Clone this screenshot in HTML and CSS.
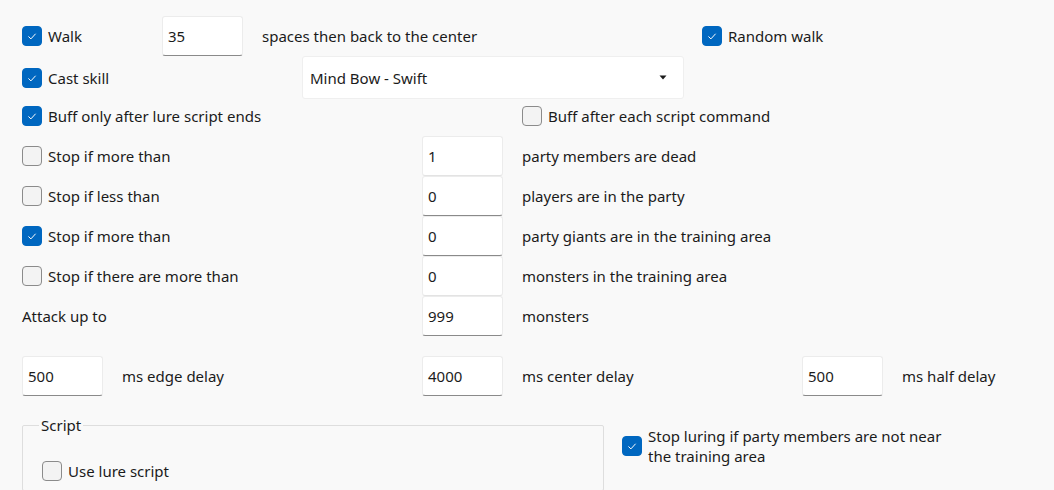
FILE: index.html
```html
<!DOCTYPE html>
<html>
<head>
<meta charset="utf-8">
<link rel="stylesheet" href="styles.css">
</head>
<body>
<div class="form">
  <div class="row r-walk">
    <div class="check"><span class="box on"><svg viewBox="0 0 20 20"><polyline points="6,10.5 8.8,13.2 14,7.5"/></svg></span><span>Walk</span></div>
    <div class="field">35</div>
    <span class="text">spaces then back to the center</span>
    <div class="check"><span class="box on"><svg viewBox="0 0 20 20"><polyline points="6,10.5 8.8,13.2 14,7.5"/></svg></span><span>Random walk</span></div>
  </div>
  <div class="row r-skill">
    <div class="check"><span class="box on"><svg viewBox="0 0 20 20"><polyline points="6,10.5 8.8,13.2 14,7.5"/></svg></span><span>Cast skill</span></div>
    <div class="combo"><span>Mind Bow - Swift</span><svg class="arrow" viewBox="0 0 8 5"><polygon points="0.5,0.5 7.5,0.5 4,4.5"/></svg></div>
  </div>
  <div class="row r-buff">
    <div class="check"><span class="box on"><svg viewBox="0 0 20 20"><polyline points="6,10.5 8.8,13.2 14,7.5"/></svg></span><span>Buff only after lure script ends</span></div>
    <div class="check"><span class="box"></span><span>Buff after each script command</span></div>
  </div>
  <div class="row r-stop">
    <div class="check"><span class="box"></span><span>Stop if more than</span></div>
    <div class="field light">1</div>
    <span class="text">party members are dead</span>
  </div>
  <div class="row r-stop">
    <div class="check"><span class="box"></span><span>Stop if less than</span></div>
    <div class="field">0</div>
    <span class="text">players are in the party</span>
  </div>
  <div class="row r-stop">
    <div class="check"><span class="box on"><svg viewBox="0 0 20 20"><polyline points="6,10.5 8.8,13.2 14,7.5"/></svg></span><span>Stop if more than</span></div>
    <div class="field">0</div>
    <span class="text">party giants are in the training area</span>
  </div>
  <div class="row r-stop">
    <div class="check"><span class="box"></span><span>Stop if there are more than</span></div>
    <div class="field light">0</div>
    <span class="text">monsters in the training area</span>
  </div>
  <div class="row r-stop">
    <span class="text">Attack up to</span>
    <div class="field">999</div>
    <span class="text">monsters</span>
  </div>
  <div class="row r-delay">
    <div class="field">500</div>
    <span class="text">ms edge delay</span>
    <div class="field">4000</div>
    <span class="text">ms center delay</span>
    <div class="field">500</div>
    <span class="text">ms half delay</span>
  </div>
  <div class="bottom">
    <fieldset class="group">
      <legend class="legend">Script</legend>
      <div class="group-row">
        <div class="check"><span class="box"></span><span>Use lure script</span></div>
      </div>
    </fieldset>
    <div class="check multi"><span class="box on"><svg viewBox="0 0 20 20"><polyline points="6,10.5 8.8,13.2 14,7.5"/></svg></span><span class="multi-text">Stop luring if party members are not near<br>the training area</span></div>
  </div>
</div>
</body>
</html>
```
FILE: styles.css
```css
html, body {
  margin: 0;
  padding: 0;
  background: #f9f9f9;
}
body {
  font-family: "Noto Sans", "Liberation Sans", sans-serif;
  font-size: 15px;
  color: #1b1b1b;
  width: 1054px;
  height: 490px;
  overflow: hidden;
}
.form {
  padding: 16px 0 0 22px;
}
.row {
  display: grid;
  height: 40px;
  align-items: center;
}
.r-walk { grid-template-columns: 140px 100px 440px auto; }
.r-skill { grid-template-columns: 280px 382px; }
.r-buff { grid-template-columns: 500px auto; }
.r-stop { grid-template-columns: 400px 100px auto; }
.r-delay {
  grid-template-columns: 100px 300px 100px 280px 100px auto;
  margin-top: 20px;
}
.check {
  display: flex;
  align-items: center;
  gap: 6px;
  white-space: nowrap;
}
.box {
  width: 20px;
  height: 20px;
  box-sizing: border-box;
  border-radius: 4px;
  border: 1px solid #8b8b8b;
  background: #f3f3f3;
  flex: none;
  display: flex;
}
.box.on {
  background: #0067c0;
  border-color: #0067c0;
}
.box svg {
  width: 18px;
  height: 18px;
  fill: none;
  stroke: #ffffff;
  stroke-width: 1.1;
}
.text {
  white-space: nowrap;
}
.field {
  width: 81px;
  height: 40px;
  box-sizing: border-box;
  background: #ffffff;
  border: 1px solid #ececec;
  border-bottom: 1px solid #8a8a8a;
  border-radius: 3px;
  padding-left: 5px;
  display: flex;
  align-items: center;
}
.field.light {
  border-bottom-color: #e3e3e3;
}
.combo {
  width: 382px;
  height: 43px;
  box-sizing: border-box;
  background: #ffffff;
  border: 1px solid #efefef;
  border-radius: 3px;
  padding: 0 16px 0 7px;
  display: flex;
  align-items: center;
  justify-content: space-between;
}
.arrow {
  width: 8px;
  height: 5px;
  fill: #1b1b1b;
}
.bottom {
  display: flex;
  align-items: flex-start;
  margin-top: 19px;
}
.group {
  width: 582px;
  box-sizing: border-box;
  margin: 0;
  border: 1px solid #dedede;
  border-radius: 2px;
  padding: 0 0 9px 19px;
}
.legend {
  margin-left: -3px;
  padding: 0 2px;
  line-height: 20px;
}
.group-row {
  height: 20px;
  margin-top: 26px;
  display: flex;
  align-items: center;
}
.multi {
  margin-left: 18px;
  margin-top: 11px;
}
.multi-text {
  line-height: 20px;
}
```
